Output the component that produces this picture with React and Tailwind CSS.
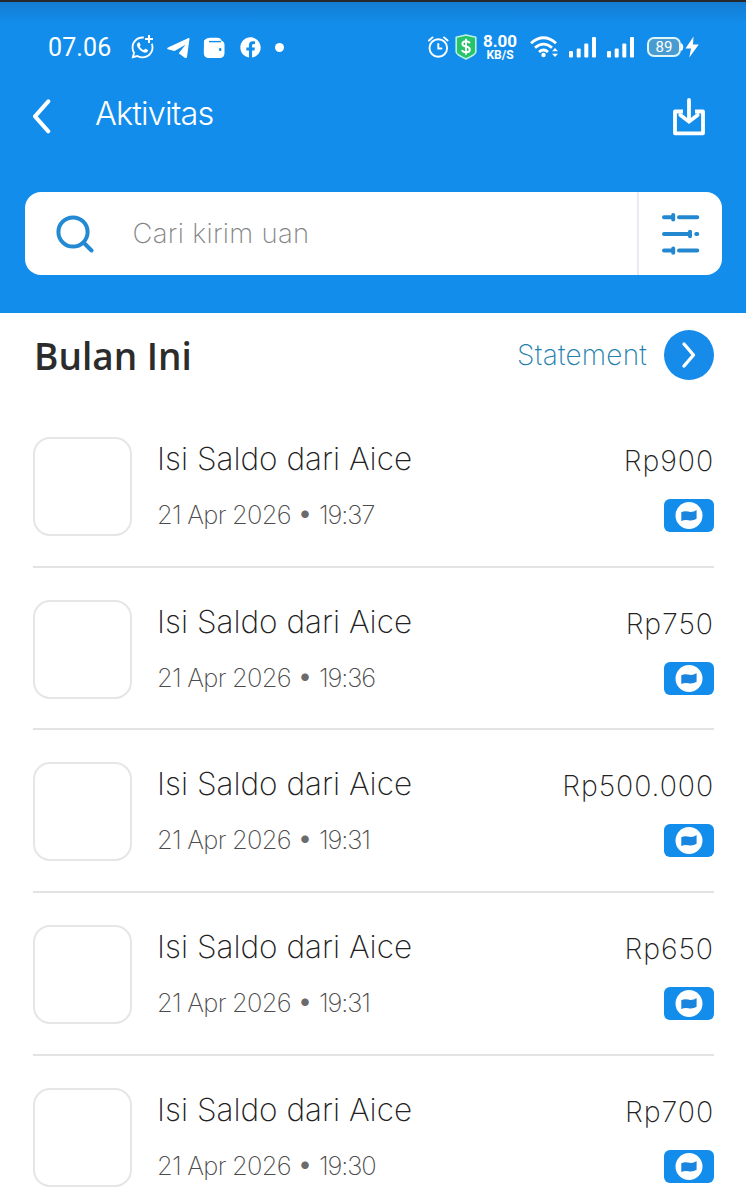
import React from "react";
import { FaWhatsapp, FaFacebook } from "react-icons/fa";

const items = [
  { time: "19:37", amount: "Rp900" },
  { time: "19:36", amount: "Rp750" },
  { time: "19:31", amount: "Rp500.000" },
  { time: "19:31", amount: "Rp650" },
  { time: "19:30", amount: "Rp700" },
];

function Signal({ className }) {
  return (
    <svg className={className} width="28" height="22" viewBox="0 0 28 22" fill="currentColor">
      <rect x="0" y="15" width="4" height="6.5" rx="1" />
      <rect x="7.7" y="12.5" width="4" height="9" rx="1" />
      <rect x="15.3" y="7.5" width="4" height="14" rx="1" />
      <rect x="23" y="1" width="4" height="20.5" rx="1" />
    </svg>
  );
}

function StatusBar() {
  return (
    <div className="flex h-[90px] items-start border-t-2 border-[#26282b] bg-linear-to-b from-[#137dd2] to-[#128deb] to-25% pl-12 pt-[33px]">
      <div className="flex h-6 w-[380px] items-center">
        <span className="mt-[2px] w-[82px] whitespace-nowrap font-['Roboto',sans-serif] text-[25px] leading-6 tracking-[0.1px]">07.06</span>
        <span className="relative flex w-[37px]">
          <FaWhatsapp className="size-[25px]" />
          <svg className="absolute left-[13px] -top-[2px]" width="12" height="12" viewBox="0 0 12 12">
            <circle cx="6" cy="6" r="5.5" fill="#128deb" />
            <path d="M6 2v8M2 6h8" stroke="currentColor" strokeWidth="2" />
          </svg>
        </span>
        <svg className="mr-[13px] mt-[2px]" width="23" height="21" viewBox="0 0 23 21" fill="currentColor">
          <path d="M22.5.7 20 18.7c-.2 1.4-1.2 1.8-2.3 1l-6-4.5 6.8-8.4L7.5 13 .8 11.2c-.9-.4-.7-1.2.2-1.6L21 .2c.9-.4 1.6-.2 1.5.5Z" />
        </svg>
        <svg className="mr-[15px] mt-px" width="22" height="22" viewBox="0 0 22 22">
          <path d="M1 3.5Q3 .8 7 .8H14Q18 .8 18.5 3.7Q21.5 4.5 21.5 8V16Q21.5 21 16.5 21H6Q.8 21 .8 16Z" fill="currentColor" />
          <path d="M6 4.6H18" stroke="#128deb" strokeWidth="1.4" />
          <rect x="16" y="11" width="2.4" height="3" rx="1" fill="#128deb" />
        </svg>
        <FaFacebook className="size-[21px]" />
        <span className="ml-[14px] size-[9px] rounded-full bg-white" />
      </div>
      <div className="flex h-6 items-center">
        <svg width="21" height="22" viewBox="0 0 21 22" fill="none" stroke="currentColor" strokeWidth="1.9" strokeLinecap="round">
          <circle cx="10.3" cy="12" r="8.8" />
          <path d="M10.3 8V12.5H13.5M1 4.5 4.5 1.4M16 1.4 19.6 4.5" />
        </svg>
        <svg className="ml-[6px]" width="22" height="26" viewBox="0 0 22 26">
          <path d="M11 1 20.8 3.2V18Q20.8 20.5 11 25Q1.2 20.5 1.2 18V3.2Z" fill="#27c46d" stroke="#b9f3dd" strokeWidth="1.6" strokeLinejoin="round" />
          <path d="M14.7 9.2Q14 7.2 11 7.2Q7.4 7.2 7.4 9.9Q7.4 12 11 12.5Q14.8 13.1 14.8 15.7Q14.8 18.3 11 18.3Q7.7 18.3 7 16M11 4.8V20.7" fill="none" stroke="white" strokeWidth="1.9" />
        </svg>
        <div className="ml-[5px] w-[36px] pt-[2px] text-center font-['Roboto',sans-serif] font-bold">
          <div className="text-[17px] leading-[14px]">8.00</div>
          <div className="text-[12px] leading-[14px]">KB/S</div>
        </div>
        <svg className="ml-[12px]" width="30" height="22" viewBox="0 0 30 22" fill="none" stroke="currentColor" strokeWidth="2.8">
          <path d="M1 7.2Q13.5-3.8 26 7.2M5 11.8Q13.5 4.4 22 11.8M9 16Q13.5 12 18 16" />
          <circle cx="13.5" cy="19" r="2.2" fill="currentColor" stroke="none" />
          <path d="M22 15.3 25 12 28 15.3ZM22 17.7 25 21 28 17.7Z" fill="currentColor" stroke="none" />
        </svg>
        <Signal className="ml-[9px]" />
        <Signal className="ml-[10px]" />
        <div className="ml-[12px] flex h-[20px] w-[34px] items-center justify-center rounded-[7px] border-2 border-[#def5fa] bg-[#4a9cd0] font-['Roboto',sans-serif] text-[15px] leading-none">89</div>
        <svg className="ml-0" width="20" height="22" viewBox="0 0 20 22" fill="currentColor">
          <path d="M0 7Q2.3 8 2.3 11Q2.3 14 0 15ZM12.5.5 4.5 12.5H10L8.3 21.5 17.8 8.5H12Z" />
        </svg>
      </div>
    </div>
  );
}

function Header() {
  return (
    <header className="h-[313px] bg-[#128deb] text-white">
      <StatusBar />
      <div className="flex h-[102px] items-start pl-8 pr-10">
        <svg className="mt-[9px]" width="20" height="35" viewBox="0 0 20 35" fill="none" stroke="currentColor" strokeWidth="4" strokeLinecap="round" strokeLinejoin="round">
          <path d="M16.3 2.3 3 17.3 16.3 32.3" />
        </svg>
        <h1 className="ml-[43px] mt-[8px] whitespace-nowrap font-['Inter',sans-serif] text-[32.5px] leading-8 font-[350] tracking-[-0.9px]">Aktivitas</h1>
        <svg className="ml-auto mt-[7px]" width="34" height="40" viewBox="0 0 34 40" fill="none" stroke="currentColor" strokeWidth="3.8">
          <path d="M11 14.5H3V36.3H31V14.5H23" strokeLinejoin="round" />
          <path d="M17 3V24.5M8.3 18 17 24.7 25.7 18" strokeLinecap="round" />
        </svg>
      </div>
      <div className="mx-[25px] flex h-[83px] w-[697px] rounded-2xl bg-white">
        <div className="flex w-[614px] items-start border-r-2 border-[#e8ebf2] pl-[31px] pt-[22px]">
          <svg width="39" height="39" viewBox="0 0 39 39" fill="none" stroke="#2389d3" strokeWidth="4" strokeLinecap="round">
            <circle cx="17" cy="18" r="14.6" />
            <path d="m28 29 7.5 7.5" />
          </svg>
          <span className="ml-[37.5px] mt-[5px] whitespace-nowrap font-['Inter',sans-serif] text-[27.5px] leading-7 font-extralight tracking-[0.3px] text-[#858585]">Cari kirim uan</span>
        </div>
        <svg className="ml-[22px] mt-[19px]" width="39" height="45" viewBox="0 0 39 45" fill="none" stroke="#2488d0" strokeWidth="4" strokeLinecap="round">
          <path d="M3 6.2H11.5M18 6.2H36.3M3 23H28.5M35.2 23H36.3M3 39.6H11.5M18 39.6H36.3" />
          <path d="M12.2 4V8.4M29 20.8V25.2M12.2 37.4V41.8" />
        </svg>
      </div>
    </header>
  );
}

function Transaction({ time, amount }) {
  return (
    <li className="flex h-[162.7px] items-start border-b-2 border-[#e3e3e3] pt-8">
      <div className="size-[99px] shrink-0 rounded-[17px] border-2 border-[#e6e6e6]" />
      <div className="ml-[25px] whitespace-nowrap font-['Inter',sans-serif]">
        <div className="mt-[6px] text-[31.5px] leading-8 font-extralight text-[#222]">Isi Saldo dari Aice</div>
        <div className="mt-[27px] flex items-start text-[25.5px] leading-[26px] font-extralight tracking-[-0.75px] text-[#4c4c4c]">
          <span className="w-[134px]">21 Apr 2026</span>
          <span className="-mt-[2px] w-7 text-center text-[24px] font-normal tracking-normal text-[#6b6b6b]">•</span>
          <span className="tracking-[-1.1px]">{time}</span>
        </div>
      </div>
      <div className="ml-auto flex flex-col items-end">
        <div className="mt-[10px] whitespace-nowrap font-['Inter',sans-serif] text-[28.5px] leading-7 font-extralight tracking-[0.9px] text-[#222]">{amount}</div>
        <svg className="mt-6" width="50" height="33" viewBox="0 0 50 33">
          <rect width="50" height="33" rx="6" fill="#128deb" />
          <circle cx="25" cy="16.5" r="13.5" fill="white" />
          <path d="M17.3 13.2Q20.5 11.6 24 12.6Q29 13.6 32.6 11V19.8Q29 22 24.5 21.2Q20.5 20.4 17.3 22Z" fill="#1985df" />
        </svg>
      </div>
    </li>
  );
}

export default function App() {
  return (
    <div className="h-[1200px] w-[746px] overflow-hidden bg-white">
      <Header />
      <main className="pl-[33px] pr-8">
        <div className="flex h-[92px] items-start">
          <h2 className="ml-px mt-[23px] whitespace-nowrap font-['Open_Sans',sans-serif] text-[37px] leading-10 font-semibold text-[#2c2c2c]">Bulan Ini</h2>
          <span className="ml-auto mt-[28px] whitespace-nowrap font-['Inter',sans-serif] text-[28px] leading-7 font-extralight tracking-[0.2px] text-[#257fae]">Statement</span>
          <svg className="ml-[17px] mt-[17px]" width="50" height="50" viewBox="0 0 50 50" fill="none">
            <circle cx="25" cy="25" r="25" fill="#168bea" />
            <path d="M20 14 29.5 25 20 36" stroke="white" strokeWidth="3.4" strokeLinecap="round" strokeLinejoin="round" />
          </svg>
        </div>
        <ul>
          {items.map((item, i) => (
            <Transaction key={i} {...item} />
          ))}
        </ul>
      </main>
    </div>
  );
}
